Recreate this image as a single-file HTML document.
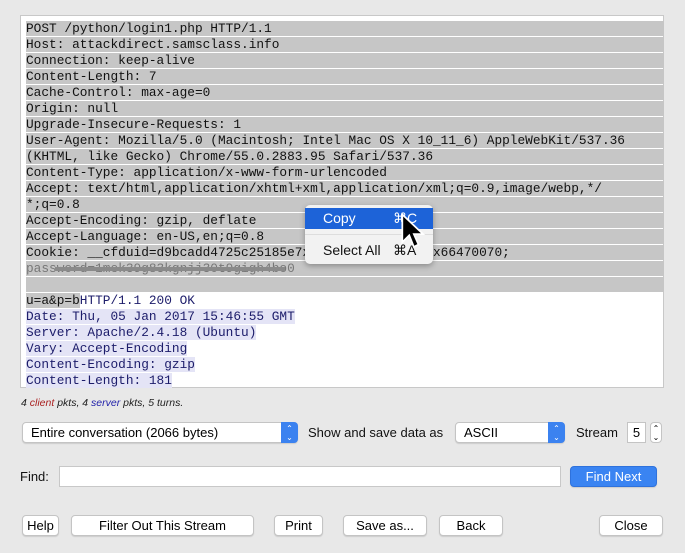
<!DOCTYPE html>
<html><head><meta charset="utf-8"><style>
*{margin:0;padding:0;box-sizing:border-box}
body{width:685px;height:553px;background:#e8e8e8;font-family:"Liberation Sans",sans-serif;position:relative;overflow:hidden}
.ta{position:absolute;left:20px;top:15px;width:644px;height:373px;background:#fff;border:1px solid #c8c8c8}
.r{position:absolute;left:5px;height:15px;font-family:"Liberation Mono",monospace;font-size:12.8px;line-height:15px;white-space:pre;color:#111}
.g{width:638px;background:#c6c6c6}
.s{background:#e4e4f6;color:#1c1c6a}
.a{position:absolute;font-size:13px;color:#111}
.btn{position:absolute;height:21px;background:#fff;border:1px solid #c4c4c4;border-radius:4px;font-size:13px;text-align:center;line-height:19px;box-shadow:0 1px 1px rgba(0,0,0,.12)}
.sel{position:absolute;height:21px;background:#fff;border:1px solid #c4c4c4;border-radius:4px;font-size:13px;line-height:19px;padding-left:8px;box-shadow:0 1px 1px rgba(0,0,0,.12)}
.arr{position:absolute;right:-1px;top:-1px;width:17px;height:21px;background:#3b82f0;border-radius:0 4px 4px 0;color:#fff;font-size:8px;line-height:9px;text-align:center;padding-top:2px}
</style></head><body>
<div class="ta">
<div class="r g" style="top:5px">POST /python/login1.php HTTP/1.1</div>
<div class="r g" style="top:21px">Host: attackdirect.samsclass.info</div>
<div class="r g" style="top:37px">Connection: keep-alive</div>
<div class="r g" style="top:53px">Content-Length: 7</div>
<div class="r g" style="top:69px">Cache-Control: max-age=0</div>
<div class="r g" style="top:85px">Origin: null</div>
<div class="r g" style="top:101px">Upgrade-Insecure-Requests: 1</div>
<div class="r g" style="top:117px">User-Agent: Mozilla/5.0 (Macintosh; Intel Mac OS X 10_11_6) AppleWebKit/537.36</div>
<div class="r g" style="top:133px">(KHTML, like Gecko) Chrome/55.0.2883.95 Safari/537.36</div>
<div class="r g" style="top:149px">Content-Type: application/x-www-form-urlencoded</div>
<div class="r g" style="top:165px">Accept: text/html,application/xhtml+xml,application/xml;q=0.9,image/webp,*/</div>
<div class="r g" style="top:181px">*;q=0.8</div>
<div class="r g" style="top:197px">Accept-Encoding: gzip, deflate</div>
<div class="r g" style="top:213px">Accept-Language: en-US,en;q=0.8</div>
<div class="r g" style="top:229px">Cookie: __cfduid=d9bcadd4725c25185e7xxxxxxxxxxxxxxxxxx66470070;</div>
<div class="r g" style="top:245px;color:#777">password=1mek39g83kgnjj30t9gigh4bo0</div>
<div style="position:absolute;left:34px;top:251px;width:230px;height:4px;background:#8a8a8a"></div>
<div class="r g" style="top:261px"> </div>
<div class="r" style="top:277px"><span style="background:#c6c6c6">u=a&amp;p=b</span><span style="color:#1c1c6a">HTTP/1.1 200 OK</span></div>
<div class="r s" style="top:293px">Date: Thu, 05 Jan 2017 15:46:55 GMT</div>
<div class="r s" style="top:309px">Server: Apache/2.4.18 (Ubuntu)</div>
<div class="r s" style="top:325px">Vary: Accept-Encoding</div>
<div class="r s" style="top:341px">Content-Encoding: gzip</div>
<div class="r s" style="top:357px">Content-Length: 181</div>
</div>
<div style="position:absolute;left:305px;top:205px;width:128px;height:59px;background:#f2f2f2;border-radius:5px;box-shadow:0 2px 6px rgba(0,0,0,.3);font-size:14px">
<div style="position:absolute;left:0;top:3px;width:128px;height:21px;background:#1d63d8;color:#fff;line-height:21px;padding-left:18px">Copy<span style="position:absolute;left:88px">⌘C</span></div>
<div style="position:absolute;left:0;top:29px;width:128px;height:1px;background:#ddd"></div>
<div style="position:absolute;left:18px;top:35px;line-height:20px;color:#111">Select All<span style="position:absolute;left:70px;width:60px">⌘A</span></div>
</div>
<svg style="position:absolute;left:400px;top:212px" width="30" height="42" viewBox="0 0 26 34"><path d="M2 1 L2 25 L8 19 L12 29 L16 27 L12 18 L20 18 Z" fill="#000" stroke="#fff" stroke-width="1.5"/></svg>
<div class="a" style="left:21px;top:397px;font-size:10.5px;font-style:italic;color:#222">4 <span style="color:#a22">client</span> pkts, 4 <span style="color:#22a">server</span> pkts, 5 turns.</div>
<div class="sel" style="left:22px;top:422px;width:276px">Entire conversation (2066 bytes)<div class="arr">⌃<br>⌄</div></div>
<div class="a" style="left:308px;top:425px">Show and save data as</div>
<div class="sel" style="left:455px;top:422px;width:110px">ASCII<div class="arr">⌃<br>⌄</div></div>
<div class="a" style="left:576px;top:425px">Stream</div>
<div style="position:absolute;left:627px;top:422px;width:19px;height:21px;background:#fff;border:1px solid #c4c4c4;font-size:13px;line-height:19px;text-align:center">5</div>
<div style="position:absolute;left:650px;top:422px;width:12px;height:21px;background:#fff;border:1px solid #c4c4c4;border-radius:4px;font-size:8px;line-height:9px;text-align:center;padding-top:1px">⌃<br>⌄</div>
<div class="a" style="left:20px;top:469px">Find:</div>
<div style="position:absolute;left:59px;top:466px;width:502px;height:21px;background:#fff;border:1px solid #c8c8c8"></div>
<div class="btn" style="left:570px;top:466px;width:87px;background:#3a84f2;border-color:#2f72dc;color:#fff">Find Next</div>
<div class="btn" style="left:22px;top:515px;width:37px">Help</div>
<div class="btn" style="left:71px;top:515px;width:183px">Filter Out This Stream</div>
<div class="btn" style="left:274px;top:515px;width:49px">Print</div>
<div class="btn" style="left:343px;top:515px;width:84px">Save as...</div>
<div class="btn" style="left:439px;top:515px;width:64px">Back</div>
<div class="btn" style="left:599px;top:515px;width:64px">Close</div>
</body></html>
